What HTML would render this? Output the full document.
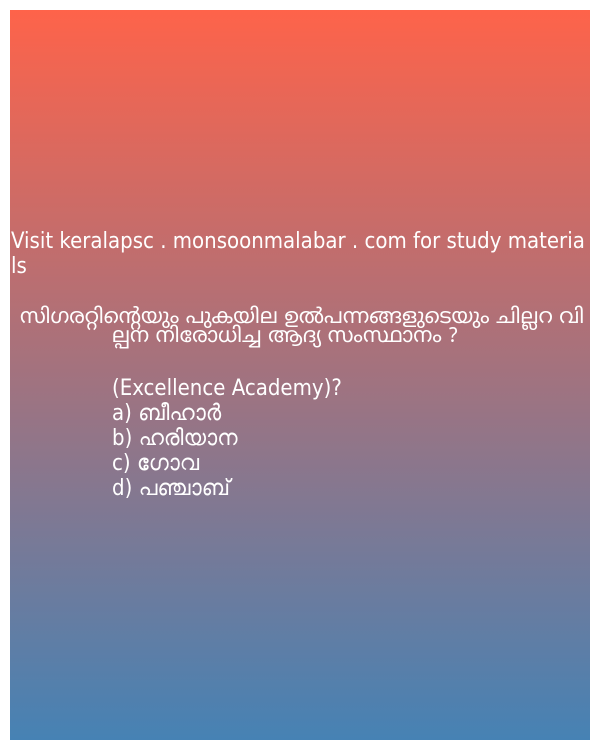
<!DOCTYPE html>
<html><head><meta charset="utf-8"><style>
html,body{margin:0;padding:0;background:#fff;width:600px;height:750px;overflow:hidden}
.box{position:absolute;left:10px;top:10px;width:580px;height:730px;background:linear-gradient(#fe634a,#4682b4);color:#fff;font-family:"Liberation Sans Narrow","DejaVu Sans Condensed","Liberation Sans",sans-serif;font-size:22px}
.l{position:absolute;white-space:nowrap;line-height:25px}
.m{font-family:"Liberation Sans Narrow","Noto Sans Malayalam","DejaVu Sans",sans-serif;font-size:21px;line-height:18px}
</style></head><body><div class="box">
<div class="l" style="left:1px;top:219px">Visit keralapsc . monsoonmalabar . com for study materia</div>
<div class="l" style="left:1px;top:244px">ls</div>
<div class="l m" style="left:10px;top:300px">സിഗരറ്റിന്റെയും പുകയില ഉൽപന്നങ്ങളുടെയും ചില്ലറ വി</div>
<div class="l m" style="left:102px;top:319px">ല്പന നിരോധിച്ച ആദ്യ സംസ്ഥാനം ?</div>
<div class="l" style="left:102px;top:366px">(Excellence Academy)?</div>
<div class="l" style="left:102px;top:391px">a) ബീഹാർ</div>
<div class="l" style="left:102px;top:416px">b) ഹരിയാന</div>
<div class="l" style="left:102px;top:441px">c) ഗോവ</div>
<div class="l" style="left:102px;top:466px">d) പഞ്ചാബ്</div>
</div></body></html>
